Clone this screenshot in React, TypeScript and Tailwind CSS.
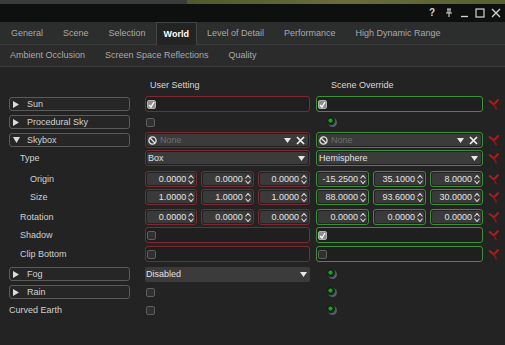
import React from 'react';

const font = { fontFamily: '"Liberation Sans", Arial, sans-serif' };

const Check = ({ checked }: { checked?: boolean }) => (
  <span
    className={
      'w-[9px] h-[9px] rounded-[2px] border flex items-center justify-center shrink-0 ' +
      (checked ? 'bg-[#8c8c8c] border-[#b0b0b0]' : 'bg-[#303030] border-[#5e5e5e]')
    }
  >
    {checked && (
      <svg width="7" height="7" viewBox="0 0 7 7">
        <path d="M1 4 L3 6 L6 1" stroke="#ffffff" strokeWidth="1.4" fill="none" />
      </svg>
    )}
  </span>
);

const Caret = () => (
  <svg width="7" height="5" viewBox="0 0 7 5">
    <path d="M0 0 L7 0 L3.5 5 Z" fill="#e8e8e8" />
  </svg>
);

const SpinArrows = () => (
  <svg width="6" height="9" viewBox="0 0 6 9" className="ml-[2px]">
    <path d="M0.5 3.5 L3 0.5 L5.5 3.5" stroke="#d8d8d8" strokeWidth="1.1" fill="none" />
    <path d="M0.5 5.5 L3 8.5 L5.5 5.5" stroke="#d8d8d8" strokeWidth="1.1" fill="none" />
  </svg>
);

const Reset = () => (
  <svg width="12" height="13" viewBox="0 0 12 13">
    <path d="M1 2.5 L6 6.5 L10.5 1.5" stroke="#b01c1c" strokeWidth="1.9" fill="none" />
    <path d="M6 6.5 L8.5 11.5" stroke="#8a1515" strokeWidth="1.7" fill="none" />
  </svg>
);

const Dot = () => (
  <svg width="12" height="12" viewBox="0 0 12 12">
    <circle cx="6.5" cy="6.5" r="4.5" fill="#51606f" />
    <circle cx="5" cy="5" r="4.2" fill="#232323" />
    <circle cx="4.5" cy="4.5" r="2.6" fill="#17a323" stroke="#0a0a0a" strokeWidth="0.8" />
  </svg>
);

const Tree = ({ label, open }: { label: string; open?: boolean }) => (
  <div className="w-full h-[14px] border border-[#5a5a5a] rounded-[3px] bg-[#262626] flex items-center pl-[3px] text-[#d2d2d2]">
    <span className="w-[8px] flex items-center">
      {open ? (
        <svg width="7" height="6" viewBox="0 0 7 6"><path d="M0 0 L7 0 L3.5 6 Z" fill="#dcdcdc" /></svg>
      ) : (
        <svg width="6" height="7" viewBox="0 0 6 7"><path d="M0 0 L6 3.5 L0 7 Z" fill="#dcdcdc" /></svg>
      )}
    </span>
    <span className="ml-[6px]">{label}</span>
  </div>
);

const Framed = ({ tone, children, pad }: { tone: 'red' | 'green'; children: React.ReactNode; pad?: boolean }) => (
  <div
    className={
      'w-full h-[16px] rounded-[3px] border flex items-center ' +
      (pad ? 'p-[1px] ' : 'pl-[1px] ') +
      (tone === 'red' ? 'border-[#7a2a31] bg-[#1f1f1f]' : 'border-[#3f8f3a] bg-[#1f1f1f]')
    }
  >
    {children}
  </div>
);

const Combo = ({ text, none, clear }: { text: string; none?: boolean; clear?: boolean }) => (
  <div className="w-full h-full bg-[#3b3b3b] rounded-[2px] flex items-center pl-[1px] pr-[3px]">
    {none && (
      <svg width="9" height="9" viewBox="0 0 9 9" className="mr-[3px]">
        <circle cx="4.5" cy="4.5" r="3.6" stroke="#e6e6e6" strokeWidth="1.3" fill="none" />
        <path d="M2 2 L7 7" stroke="#e6e6e6" strokeWidth="1.3" />
      </svg>
    )}
    <span className={none ? 'text-[#6e6e6e]' : 'text-[#e2e2e2]'}>{text}</span>
    <span className="ml-auto flex items-center">
      <Caret />
    </span>
    {clear && (
      <svg width="9" height="9" viewBox="0 0 9 9" className="ml-[5px]">
        <path d="M1 1 L8 8 M8 1 L1 8" stroke="#f0f0f0" strokeWidth="1.7" />
      </svg>
    )}
  </div>
);

const Spins = ({ tone, values }: { tone: 'red' | 'green'; values: string[] }) => (
  <div className="w-full h-[16px] flex gap-[4px]">
    {values.map((v, i) => (
      <div
        key={i}
        className={
          'flex-1 rounded-[3px] border p-[1px] ' +
          (tone === 'red' ? 'border-[#7a2a31]' : 'border-[#3f8f3a]')
        }
      >
        <div className="h-full bg-[#3a3a3a] rounded-[2px] flex items-center justify-end pr-[1px] text-[#e4e4e4]">
          {v}
          <SpinArrows />
        </div>
      </div>
    ))}
  </div>
);

type RowProps = {
  label: React.ReactNode;
  user?: React.ReactNode;
  scene?: React.ReactNode;
  reset?: boolean;
  mt: string;
};

const Row = ({ label, user, scene, reset, mt }: RowProps) => (
  <div className={'flex items-center h-[16px] ' + mt}>
    <div className="w-[121px] flex items-center">{label}</div>
    <div className="ml-[15px] w-[165px] flex items-center">{user}</div>
    <div className="ml-[6px] w-[167px] flex items-center">{scene}</div>
    <div className="ml-[5px] w-[12px] flex items-center">{reset && <Reset />}</div>
  </div>
);

const Label = ({ text, indent }: { text: string; indent: string }) => (
  <span className={'text-[#d0d0d0] ' + indent}>{text}</span>
);

export default function App() {
  const tabs1 = ['General', 'Scene', 'Selection', 'World', 'Level of Detail', 'Performance', 'High Dynamic Range'];
  const tabs2 = ['Ambient Occlusion', 'Screen Space Reflections', 'Quality'];

  return (
    <div className="w-[505px] h-[345px] overflow-hidden bg-[#232323] text-[9px] leading-none" style={font}>
      {/* strip of the window behind */}
      <div className="h-[4px] flex">
        <div className="w-[187px] bg-[#3a3b3b]" />
        <div className="flex-1 bg-gradient-to-r from-[#4f5a2a] via-[#6a6c3c] to-[#556030]" />
      </div>

      {/* title bar */}
      <div className="h-[18px] bg-[#0e0f0f] flex items-center justify-end pr-[4px] gap-[6px] text-[#d4d4d4]">
        <span className="text-[10px] font-bold">?</span>
        <svg width="8" height="10" viewBox="0 0 8 10" className="ml-[4px]">
          <path d="M2 1 H6 M3 1 V5 M5 1 V5 M1 5 H7 M4 5 V9" stroke="#d4d4d4" strokeWidth="1.1" fill="none" />
        </svg>
        <svg width="9" height="10" viewBox="0 0 9 10" className="ml-[1px]">
          <path d="M1 8.5 H8" stroke="#d4d4d4" strokeWidth="1.3" />
        </svg>
        <svg width="10" height="10" viewBox="0 0 10 10">
          <rect x="1" y="1" width="8" height="8" stroke="#d4d4d4" strokeWidth="1.2" fill="none" />
        </svg>
        <svg width="10" height="10" viewBox="0 0 10 10">
          <path d="M1 1 L9 9 M9 1 L1 9" stroke="#d4d4d4" strokeWidth="1.3" />
        </svg>
      </div>

      {/* tab row 1 */}
      <div className="h-[23px] bg-[#2c2d2d] border-b border-[#3c3c3c] flex items-end pl-[1px]">
        {tabs1.map((t) =>
          t === 'World' ? (
            <div
              key={t}
              className="h-[23px] px-[7px] flex items-center bg-[#232323] border-x border-t border-[#454545] text-white font-bold -mb-[1px]"
            >
              {t}
            </div>
          ) : (
            <div key={t} className="h-[22px] px-[10px] flex items-center text-[#a9a9a9]">
              {t}
            </div>
          )
        )}
      </div>

      {/* tab row 2 */}
      <div className="h-[22px] bg-[#2b2b2b] border-b border-[#3c3c3c] flex items-center">
        {tabs2.map((t) => (
          <div key={t} className="px-[10px] text-[#a9a9a9]">
            {t}
          </div>
        ))}
      </div>

      {/* settings */}
      <div className="pl-[9px] pt-[11px] text-[#d0d0d0]">
        <div className="flex items-center h-[14px]">
          <div className="w-[121px]" />
          <div className="ml-[20px] w-[165px] text-[#d8d8d8]">User Setting</div>
          <div className="ml-[16px] text-[#d8d8d8]">Scene Override</div>
        </div>

        <Row
          mt="mt-[4px]"
          label={<Tree label="Sun" />}
          user={
            <Framed tone="red">
              <Check checked />
            </Framed>
          }
          scene={
            <Framed tone="green">
              <Check checked />
            </Framed>
          }
          reset
        />
        <Row
          mt="mt-[2px]"
          label={<Tree label="Procedural Sky" />}
          user={<span className="ml-[1px]"><Check /></span>}
          scene={<span className="ml-[10px]"><Dot /></span>}
        />
        <Row
          mt="mt-[2px]"
          label={<Tree label="Skybox" open />}
          user={
            <Framed tone="red" pad>
              <Combo text="None" none clear />
            </Framed>
          }
          scene={
            <Framed tone="green" pad>
              <Combo text="None" none clear />
            </Framed>
          }
          reset
        />
        <Row
          mt="mt-[2px]"
          label={<Label text="Type" indent="ml-[11px]" />}
          user={
            <Framed tone="red" pad>
              <Combo text="Box" />
            </Framed>
          }
          scene={
            <Framed tone="green" pad>
              <Combo text="Hemisphere" />
            </Framed>
          }
          reset
        />
        <Row
          mt="mt-[5px]"
          label={<Label text="Origin" indent="ml-[21px]" />}
          user={<Spins tone="red" values={['0.0000', '0.0000', '0.0000']} />}
          scene={<Spins tone="green" values={['-15.2500', '35.1000', '8.0000']} />}
          reset
        />
        <Row
          mt="mt-[2px]"
          label={<Label text="Size" indent="ml-[21px]" />}
          user={<Spins tone="red" values={['1.0000', '1.0000', '1.0000']} />}
          scene={<Spins tone="green" values={['88.0000', '93.6000', '30.0000']} />}
          reset
        />
        <Row
          mt="mt-[4px]"
          label={<Label text="Rotation" indent="ml-[11px]" />}
          user={<Spins tone="red" values={['0.0000', '0.0000', '0.0000']} />}
          scene={<Spins tone="green" values={['0.0000', '0.0000', '0.0000']} />}
          reset
        />
        <Row
          mt="mt-[2px]"
          label={<Label text="Shadow" indent="ml-[11px]" />}
          user={
            <Framed tone="red">
              <Check />
            </Framed>
          }
          scene={
            <Framed tone="green">
              <Check checked />
            </Framed>
          }
          reset
        />
        <Row
          mt="mt-[3px]"
          label={<Label text="Clip Bottom" indent="ml-[11px]" />}
          user={
            <Framed tone="red">
              <Check />
            </Framed>
          }
          scene={
            <Framed tone="green">
              <Check />
            </Framed>
          }
          reset
        />
        <Row
          mt="mt-[4px]"
          label={<Tree label="Fog" />}
          user={
            <div className="w-full h-[15px]">
              <Combo text="Disabled" />
            </div>
          }
          scene={<span className="ml-[10px]"><Dot /></span>}
        />
        <Row
          mt="mt-[2px]"
          label={<Tree label="Rain" />}
          user={<span className="ml-[1px]"><Check /></span>}
          scene={<span className="ml-[10px]"><Dot /></span>}
        />
        <Row
          mt="mt-[2px]"
          label={<Label text="Curved Earth" indent="" />}
          user={<span className="ml-[1px]"><Check /></span>}
          scene={<span className="ml-[10px]"><Dot /></span>}
        />
      </div>
    </div>
  );
}
